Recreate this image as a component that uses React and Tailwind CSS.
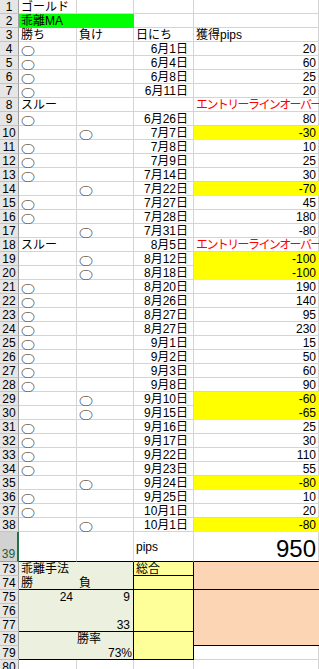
import React from "react";

const font = { fontFamily: '"Liberation Sans", "Noto Sans CJK JP", sans-serif' };

// [row, mark, date, pips, yellow]
const rows = [
    [4, "w", "6月1日", 20],
    [5, "w", "6月4日", 60],
    [6, "w", "6月8日", 25],
    [7, "w", "6月11日", 20],
    [8, "s", "", null],
    [9, "w", "6月26日", 80],
    [10, "l", "7月7日", -30, true],
    [11, "w", "7月8日", 10],
    [12, "w", "7月9日", 25],
    [13, "w", "7月14日", 30],
    [14, "l", "7月22日", -70, true],
    [15, "w", "7月27日", 45],
    [16, "w", "7月28日", 180],
    [17, "l", "7月31日", -80],
    [18, "s", "8月5日", null],
    [19, "l", "8月12日", -100, true],
    [20, "l", "8月18日", -100, true],
    [21, "w", "8月20日", 190],
    [22, "w", "8月26日", 140],
    [23, "w", "8月27日", 95],
    [24, "w", "8月27日", 230],
    [25, "w", "9月1日", 15],
    [26, "w", "9月2日", 50],
    [27, "w", "9月3日", 60],
    [28, "w", "9月8日", 90],
    [29, "l", "9月10日", -60, true],
    [30, "l", "9月15日", -65, true],
    [31, "w", "9月16日", 25],
    [32, "w", "9月17日", 30],
    [33, "w", "9月22日", 110],
    [34, "w", "9月23日", 55],
    [35, "l", "9月24日", -80, true],
    [36, "w", "9月25日", 10],
    [37, "w", "10月1日", 20],
    [38, "l", "10月1日", -80, true],
];

const cell =
    "h-[14px] border-r border-b border-[#d4d4d4] px-[2px] pt-[1px] text-[12px] leading-[13px] whitespace-nowrap overflow-visible";

const Hdr = ({ n }) => (
    <div className="w-[19px] h-[14px] shrink-0 bg-[#e6e6e6] border-r border-b border-r-[#9e9e9e] border-b-[#c4c4c4] pt-[1px] text-center text-[12px] leading-[13px] text-black">
        {n}
    </div>
);

const Circle = () => (
    <span
        className="inline-block text-[14px] leading-[12px] scale-y-[0.7] origin-bottom"
        style={{ fontFamily: '"Noto Sans CJK JP", sans-serif' }}
    >
        ○
    </span>
);

const Row = ({ children }) => <div className="flex">{children}</div>;

const App = () => {
    return (
        <div className="w-[319px] h-[669px] overflow-hidden bg-white text-black" style={font}>
            {/* row 1 */}
            <Row>
                <Hdr n={1} />
                <div className={`${cell} w-[58px]`}>ゴールド</div>
                <div className={`${cell} w-[57px]`}></div>
                <div className={`${cell} w-[60px]`}></div>
                <div className={`${cell} w-[125px]`}></div>
            </Row>
            {/* row 2 */}
            <Row>
                <Hdr n={2} />
                <div className={`${cell} w-[115px] bg-[#00ff00] border-transparent`}>乖離MA</div>
                <div className={`${cell} w-[60px]`}></div>
                <div className={`${cell} w-[125px]`}></div>
            </Row>
            {/* row 3 */}
            <Row>
                <Hdr n={3} />
                <div className={`${cell} w-[58px]`}>勝ち</div>
                <div className={`${cell} w-[57px]`}>負け</div>
                <div className={`${cell} w-[60px]`}>日にち</div>
                <div className={`${cell} w-[125px]`}>獲得pips</div>
            </Row>

            {rows.map(([n, mark, date, pips, yellow]) => (
                <Row key={n}>
                    <Hdr n={n} />
                    <div className={`${cell} w-[58px]`}>
                        {mark === "w" && <Circle />}
                        {mark === "s" && "スルー"}
                    </div>
                    <div className={`${cell} w-[57px]`}>{mark === "l" && <Circle />}</div>
                    <div className={`${cell} w-[60px] text-right pr-[5px]`}>{date}</div>
                    {pips === null ? (
                        <div className={`${cell} w-[125px] text-[#ff0000] tracking-[-1.6px]`}>
                            エントリーラインオーバー
                        </div>
                    ) : (
                        <div
                            className={`${cell} w-[125px] text-right ${
                                yellow ? "bg-[#ffff00] border-transparent" : ""
                            }`}
                        >
                            {pips}
                        </div>
                    )}
                </Row>
            ))}

            {/* row 39 */}
            <div className="flex h-[30px]">
                <div className="w-[19px] shrink-0 bg-[#d2d2d2] border-b border-b-[#9e9e9e] border-r-2 border-r-[#217346] flex items-end justify-center text-[12px] leading-[13px] text-[#1d5e36]">
                    39
                </div>
                <div className="w-[58px] border-r border-[#d4d4d4] border-b border-b-black"></div>
                <div className="w-[57px] border-r border-[#d4d4d4] border-b border-b-black"></div>
                <div className="w-[60px] border-r border-[#d4d4d4] border-b border-b-black flex items-center px-[2px] pt-[2px] text-[12px] leading-[13px]">
                    pips
                </div>
                <div className="w-[125px] border-r border-[#d4d4d4] border-b border-b-black flex items-end justify-end pr-[2px]">
                    <span className="text-[24px] leading-[24px]">950</span>
                </div>
            </div>

            {/* rows 73 - 80 */}
            <div className="flex">
                <div className="flex flex-col">
                    {[73, 74, 75, 76, 77, 78, 79, 80].map((n) => (
                        <Hdr key={n} n={n} />
                    ))}
                </div>
                <div className="grid grid-cols-[58px_57px_60px_125px] grid-rows-[repeat(8,14px)] text-[12px] leading-[13px]">
                    <div className="col-start-1 col-span-2 row-start-1 bg-[#ebf1de] border-r border-r-black px-[2px] pt-[1px]">
                        乖離手法
                    </div>
                    <div className="col-start-3 row-start-1 bg-[#ffff99] border-r border-b border-black px-[2px] pt-[1px]">
                        総合
                    </div>
                    <div className="col-start-4 row-start-1 row-span-2 bg-[#fcd5b4] border-b border-b-black"></div>

                    <div className="col-start-1 row-start-2 bg-[#ebf1de] border-b border-b-black px-[2px] pt-[1px]">
                        勝
                    </div>
                    <div className="col-start-2 row-start-2 bg-[#ebf1de] border-b border-r border-black px-[2px] pt-[1px]">
                        負
                    </div>
                    <div className="col-start-3 row-start-2 bg-[#ffff99] border-b border-r border-black"></div>

                    <div className="col-start-1 col-span-2 row-start-3 row-span-3 bg-[#ebf1de] border-b border-r border-black grid grid-cols-[58px_56px] grid-rows-[14px_14px_13px] pt-[1px]">
                        <div className="text-right pr-[4px]">24</div>
                        <div className="text-right pr-[3px]">9</div>
                        <div></div>
                        <div></div>
                        <div></div>
                        <div className="text-right pr-[3px]">33</div>
                    </div>
                    <div className="col-start-3 row-start-3 row-span-3 bg-[#ffff99] border-b border-r border-black"></div>
                    <div className="col-start-4 row-start-3 row-span-4 bg-[#fcd5b4] border-b border-b-black"></div>

                    <div className="col-start-1 col-span-2 row-start-6 row-span-2 bg-[#ebf1de] border-b border-r border-black flex flex-col pt-[1px]">
                        <div className="h-[14px] pl-[58px]">勝率</div>
                        <div className="h-[12px] text-right pr-[1px]">73%</div>
                    </div>
                    <div className="col-start-3 row-start-6 row-span-2 bg-[#ffff99] border-b border-r border-black"></div>
                    <div className="col-start-4 row-start-7 border-r border-b border-[#d4d4d4]"></div>

                    <div className="col-start-1 row-start-8 border-r border-b border-[#d4d4d4]"></div>
                    <div className="col-start-2 row-start-8 border-r border-b border-[#d4d4d4]"></div>
                    <div className="col-start-3 row-start-8 border-r border-b border-[#d4d4d4]"></div>
                    <div className="col-start-4 row-start-8 border-r border-b border-[#d4d4d4]"></div>
                </div>
            </div>
        </div>
    );
};

export default App;
